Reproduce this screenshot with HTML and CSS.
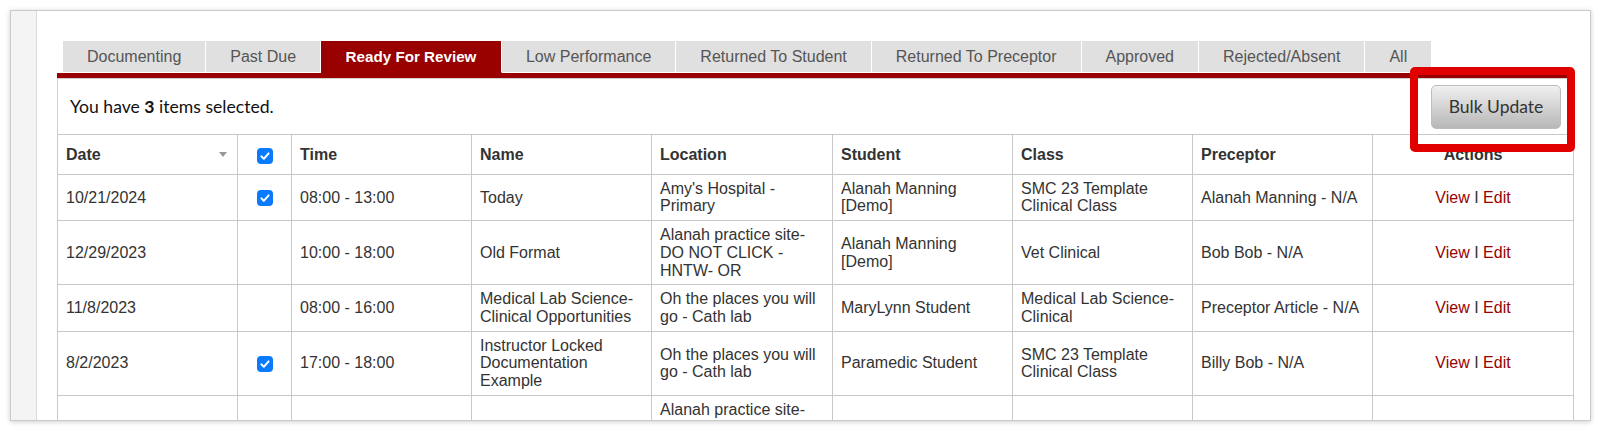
FILE: index.html
```html
<!DOCTYPE html>
<html lang="en">
<head>
<meta charset="utf-8">
<title>Shifts – Ready For Review</title>
<link rel="stylesheet" href="styles.css">
</head>
<body>
<div class="window">
  <aside class="rail"></aside>
  <main class="content">
    <nav class="tabs">
      <a class="tab" href="#">Documenting</a>
      <a class="tab" href="#">Past Due</a>
      <a class="tab is-active" href="#">Ready For Review</a>
      <a class="tab" href="#">Low Performance</a>
      <a class="tab" href="#">Returned To Student</a>
      <a class="tab" href="#">Returned To Preceptor</a>
      <a class="tab" href="#">Approved</a>
      <a class="tab" href="#">Rejected/Absent</a>
      <a class="tab" href="#">All</a>
    </nav>
    <section class="panel">
      <div class="toolbar">
        <p class="selection">You have <b>3</b> items selected.</p>
        <button class="btn-bulk" type="button">Bulk Update</button>
      </div>
      <table class="shifts">
        <colgroup>
          <col style="width:180px">
          <col style="width:54px">
          <col style="width:180px">
          <col style="width:180px">
          <col style="width:181px">
          <col style="width:180px">
          <col style="width:180px">
          <col style="width:180px">
          <col style="width:201px">
        </colgroup>
        <thead>
          <tr>
            <th><span class="sort"></span>Date</th>
            <th class="sel"><span class="check"><svg viewBox="0 0 16 16"><path d="M4.4 8.4l2.4 2.4 4.8-5.4"/></svg></span></th>
            <th>Time</th>
            <th>Name</th>
            <th>Location</th>
            <th>Student</th>
            <th>Class</th>
            <th>Preceptor</th>
            <th class="actions">Actions</th>
          </tr>
        </thead>
        <tbody>
          <tr>
            <td>10/21/2024</td>
            <td class="sel"><span class="check"><svg viewBox="0 0 16 16"><path d="M4.4 8.4l2.4 2.4 4.8-5.4"/></svg></span></td>
            <td>08:00 - 13:00</td>
            <td>Today</td>
            <td>Amy's Hospital - Primary</td>
            <td>Alanah Manning [Demo]</td>
            <td>SMC 23 Template Clinical Class</td>
            <td>Alanah Manning - N/A</td>
            <td class="actions"><a href="#">View</a> I <a href="#">Edit</a></td>
          </tr>
          <tr>
            <td>12/29/2023</td>
            <td class="sel"></td>
            <td>10:00 - 18:00</td>
            <td>Old Format</td>
            <td>Alanah practice site-DO NOT CLICK - HNTW- OR</td>
            <td>Alanah Manning [Demo]</td>
            <td>Vet Clinical</td>
            <td>Bob Bob - N/A</td>
            <td class="actions"><a href="#">View</a> I <a href="#">Edit</a></td>
          </tr>
          <tr>
            <td>11/8/2023</td>
            <td class="sel"></td>
            <td>08:00 - 16:00</td>
            <td>Medical Lab Science-Clinical Opportunities</td>
            <td>Oh the places you will go - Cath lab</td>
            <td>MaryLynn Student</td>
            <td>Medical Lab Science-Clinical</td>
            <td>Preceptor Article - N/A</td>
            <td class="actions"><a href="#">View</a> I <a href="#">Edit</a></td>
          </tr>
          <tr>
            <td>8/2/2023</td>
            <td class="sel"><span class="check"><svg viewBox="0 0 16 16"><path d="M4.4 8.4l2.4 2.4 4.8-5.4"/></svg></span></td>
            <td>17:00 - 18:00</td>
            <td>Instructor Locked Documentation Example</td>
            <td>Oh the places you will go - Cath lab</td>
            <td>Paramedic Student</td>
            <td>SMC 23 Template Clinical Class</td>
            <td>Billy Bob - N/A</td>
            <td class="actions"><a href="#">View</a> I <a href="#">Edit</a></td>
          </tr>
          <tr>
            <td>7/14/2023</td>
            <td class="sel"></td>
            <td>09:00 - 17:00</td>
            <td>Old Format</td>
            <td>Alanah practice site-DO NOT CLICK - HNTW- OR</td>
            <td>Alanah Manning</td>
            <td>Vet Clinical</td>
            <td>Bob Bob - N/A</td>
            <td class="actions"><a href="#">View</a> I <a href="#">Edit</a></td>
          </tr>
        </tbody>
      </table>
    </section>
  </main>
  <div class="callout"></div>
</div>
</body>
</html>
```

FILE: styles.css
```css
* {
  box-sizing: border-box;
}

html,
body {
  margin: 0;
  background: #fff;
}

body {
  padding: 10px;
  font-family: "Liberation Sans", Arial, Helvetica, sans-serif;
  color: #333;
}

/* app frame */
.window {
  position: relative;
  display: flex;
  width: 1581px;
  height: 411px;
  border: 1px solid #cacaca;
  background: #fff;
  box-shadow: 0 1px 5px rgba(0, 0, 0, 0.2);
  overflow: hidden;
}

.rail {
  flex: 0 0 26px;
  background: #f4f4f4;
  border-right: 1px solid #dcdcdc;
}

.content {
  flex: 1;
  min-width: 0;
  padding: 30px 16px 0 20px;
}

/* status tabs */
.tabs {
  display: flex;
  margin-left: 6px;
}

.tab {
  display: block;
  height: 32px;
  line-height: 31px;
  padding: 0 24px;
  background: #e0e0e0;
  color: #555;
  font-size: 16px;
  white-space: nowrap;
  text-decoration: none;
  border-right: 1px solid #fff;
  border-bottom: 1px solid #fff;
}

.tab.is-active {
  padding: 0 24.5px;
  background: #990000;
  color: #fff;
  font-weight: bold;
  font-size: 15.2px;
  border-bottom-color: #990000;
}

/* list panel */
.panel {
  border-top: 5px solid #990000;
}

.toolbar {
  display: flex;
  align-items: center;
  justify-content: space-between;
  height: 56px;
  padding: 0 12px;
  border: 1px solid #d0d0d0;
  border-bottom: 0;
}

.selection {
  margin: 0;
  font-family: Lato, "Open Sans", sans-serif;
  font-size: 17.6px;
  color: #111;
}

.btn-bulk {
  width: 130px;
  height: 44px;
  padding: 0;
  border: 1px solid #bdbdbd;
  border-radius: 5px;
  background: linear-gradient(#f0f0f0, #b7b7b7);
  font-family: Lato, "Open Sans", sans-serif;
  font-size: 17.5px;
  color: #333;
}

/* shifts table */
.shifts {
  width: 100%;
  table-layout: fixed;
  border-collapse: collapse;
  font-size: 16px;
  line-height: 17.7px;
}

.shifts th,
.shifts td {
  border: 1px solid #c8c8c8;
  padding: 5px 8px;
  text-align: left;
  vertical-align: middle;
}

.shifts th {
  padding-top: 11px;
  padding-bottom: 10px;
  line-height: 17px;
  font-weight: bold;
}

.shifts .sel {
  padding-left: 0;
  padding-right: 0;
  text-align: center;
}

.shifts .actions {
  text-align: center;
}

.shifts .actions a {
  color: #990000;
  text-decoration: none;
}

.sort {
  float: right;
  width: 0;
  height: 0;
  margin: 6px 2px 0 0;
  border-left: 4px solid transparent;
  border-right: 4px solid transparent;
  border-top: 5px solid #999;
}

.check {
  display: inline-block;
  width: 16px;
  height: 16px;
  border-radius: 4px;
  background: #0a7aff;
  vertical-align: middle;
}

.check svg {
  display: block;
  width: 16px;
  height: 16px;
  fill: none;
  stroke: #fff;
  stroke-width: 2;
  stroke-linecap: round;
  stroke-linejoin: round;
}

/* highlight frame around the bulk action */
.callout {
  position: absolute;
  left: 1399px;
  top: 56px;
  width: 165px;
  height: 85px;
  border: 8px solid #e10000;
  border-radius: 5px;
  pointer-events: none;
}
```
